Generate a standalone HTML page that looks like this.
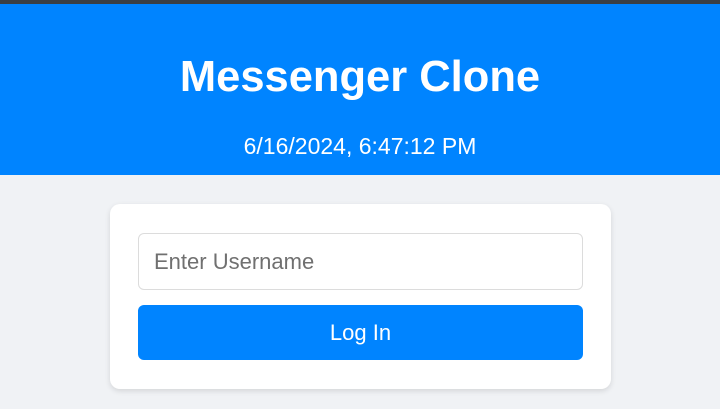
<!DOCTYPE html>
<html><head><style>
html,body{margin:0;padding:0;width:720px;height:409px;overflow:hidden;background:#f0f2f5;font-family:"Liberation Sans",sans-serif;}
.top{position:absolute;left:0;top:0;width:720px;height:4px;background:#3a3f44;}
.hdr{position:absolute;left:0;top:4px;width:720px;height:171px;background:#0084ff;color:#fff;text-align:center;}
.hdr h1{position:absolute;left:0;right:0;top:45px;margin:0;font-size:43.5px;font-weight:bold;line-height:56px;}
.hdr .d{position:absolute;left:0;right:0;top:129px;font-size:23px;line-height:26px;}
.card{position:absolute;left:110px;top:204px;width:501px;height:185px;background:#fff;border-radius:10px;box-shadow:0 2px 6px rgba(0,0,0,.12);}
.inp{position:absolute;left:28px;top:29px;border:1px solid #dcdcdc;border-radius:6px;color:#707070;font-size:22px;line-height:55px;padding-left:15px;box-sizing:border-box;width:445px;height:57px;}
.btn{position:absolute;left:28px;top:101px;width:445px;height:55px;background:#0084ff;border-radius:6px;color:#fff;font-size:22px;line-height:55px;text-align:center;}
</style></head><body>
<div class="top"></div>
<div class="hdr"><h1>Messenger Clone</h1><div class="d">6/16/2024, 6:47:12 PM</div></div>
<div class="card"><div class="inp">Enter Username</div><div class="btn">Log In</div></div>
</body></html>
